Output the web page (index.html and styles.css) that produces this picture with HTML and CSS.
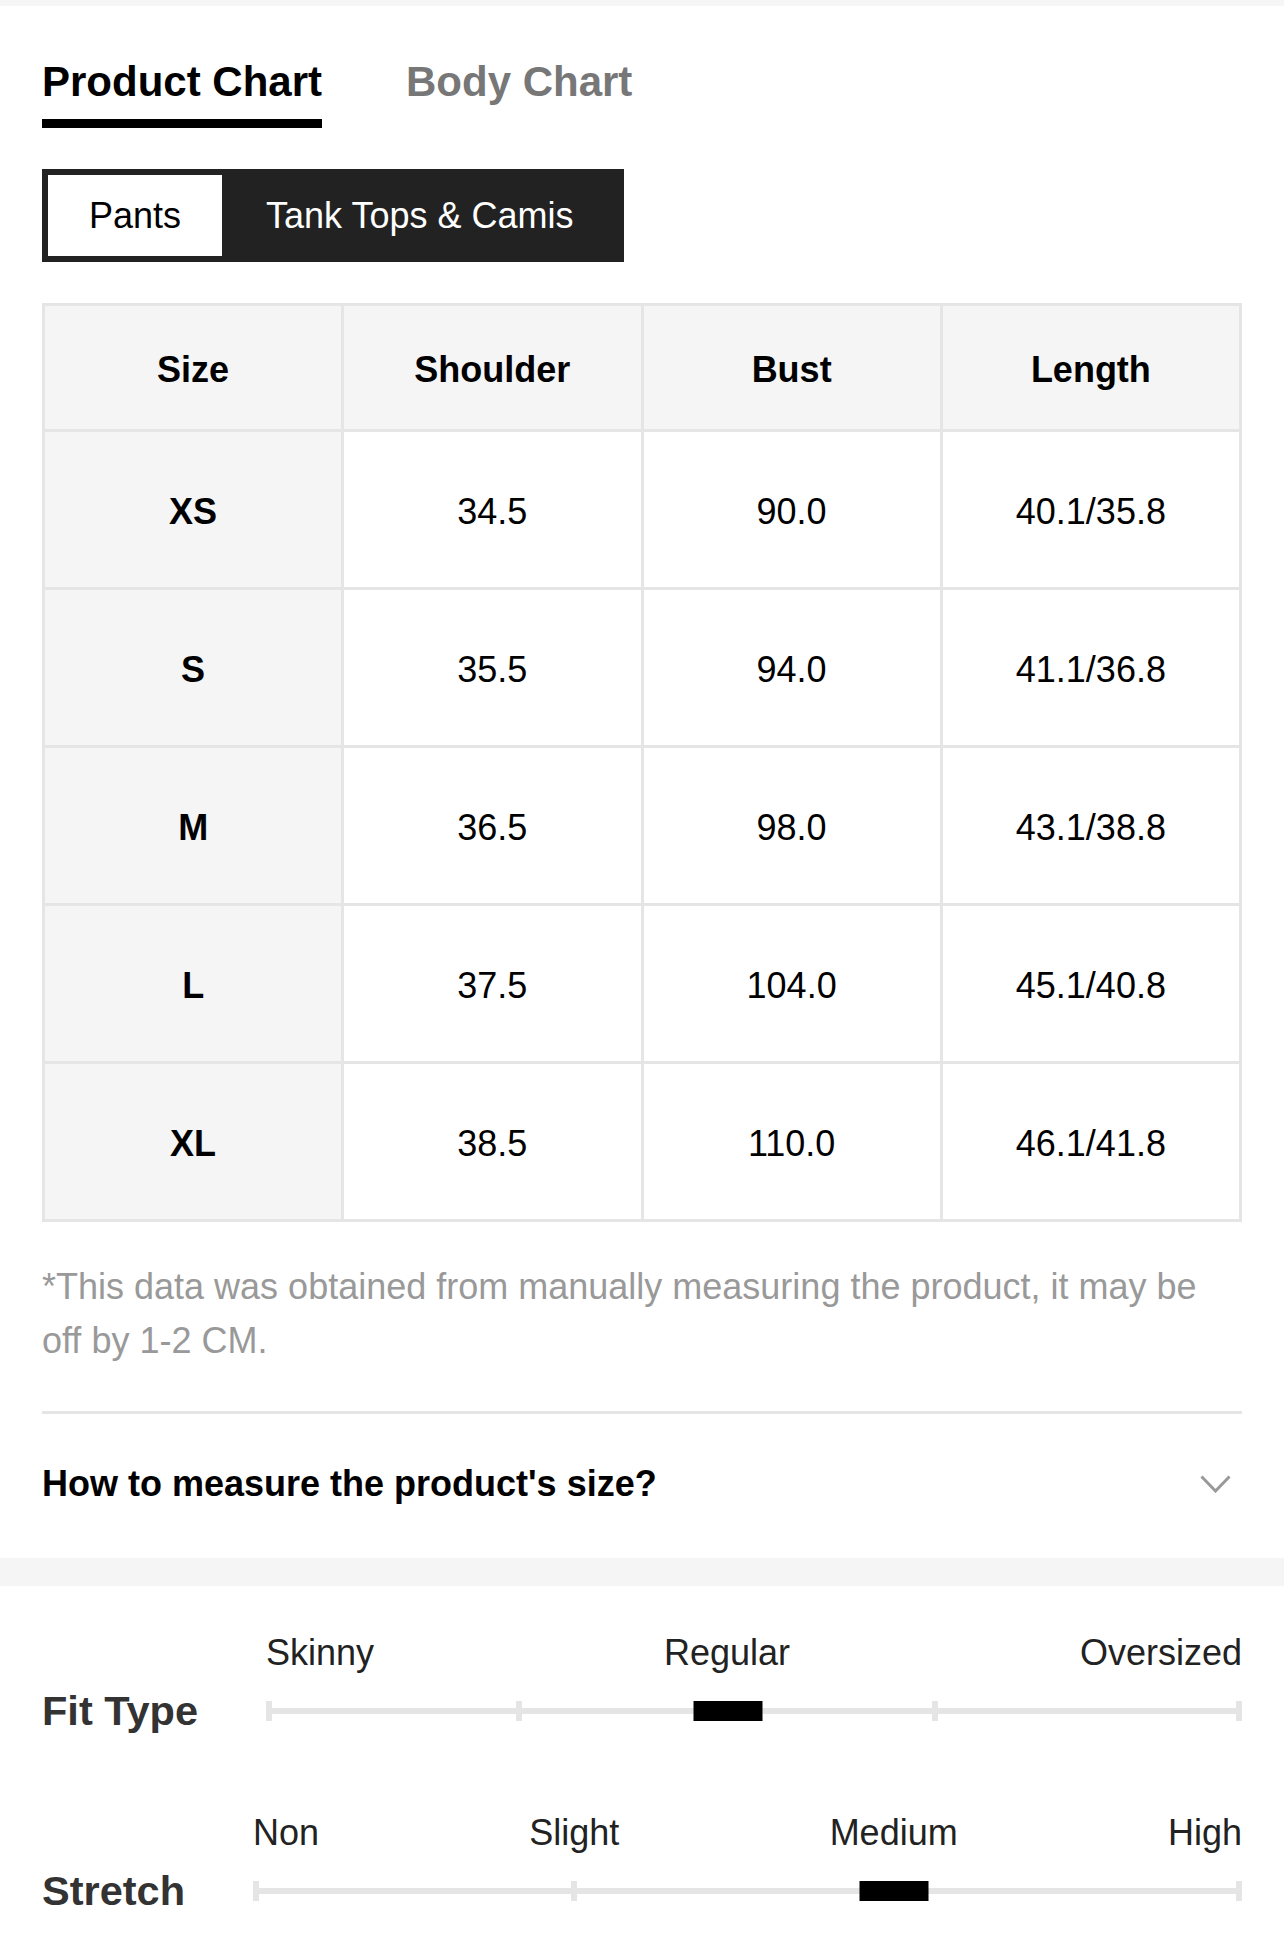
FILE: index.html
```html
<!DOCTYPE html>
<html lang="en">
<head>
<meta charset="utf-8">
<title>Size Guide</title>
<link rel="stylesheet" href="styles.css">
</head>
<body>
<div class="strip"></div>
<div class="content">
  <div class="tabs">
    <div class="tab tab-active">Product Chart</div>
    <div class="tab">Body Chart</div>
  </div>

  <div class="segment">
    <div class="seg-item seg-active">Pants</div>
    <div class="seg-item">Tank Tops &amp; Camis</div>
  </div>

  <div class="table">
    <div class="cell head">Size</div>
    <div class="cell head">Shoulder</div>
    <div class="cell head">Bust</div>
    <div class="cell head">Length</div>

    <div class="cell size">XS</div>
    <div class="cell">34.5</div>
    <div class="cell">90.0</div>
    <div class="cell">40.1/35.8</div>

    <div class="cell size">S</div>
    <div class="cell">35.5</div>
    <div class="cell">94.0</div>
    <div class="cell">41.1/36.8</div>

    <div class="cell size">M</div>
    <div class="cell">36.5</div>
    <div class="cell">98.0</div>
    <div class="cell">43.1/38.8</div>

    <div class="cell size">L</div>
    <div class="cell">37.5</div>
    <div class="cell">104.0</div>
    <div class="cell">45.1/40.8</div>

    <div class="cell size">XL</div>
    <div class="cell">38.5</div>
    <div class="cell">110.0</div>
    <div class="cell">46.1/41.8</div>
  </div>

  <p class="note">*This data was obtained from manually measuring the product, it may be off by 1-2 CM.</p>

  <div class="question">
    <span class="question-text">How to measure the product's size?</span>
    <svg class="chevron" width="31" height="18" viewBox="0 0 31 18" aria-hidden="true">
      <polyline points="1.5,1.5 15.5,16 29.5,1.5" fill="none" stroke="#999" stroke-width="3"/>
    </svg>
  </div>
</div>

<div class="band"></div>

<div class="content fits">
  <div class="fit">
    <div></div>
    <div class="labels"><span>Skinny</span><span>Regular</span><span>Oversized</span></div>
    <div class="fit-title">Fit Type</div>
    <div class="track">
      <span class="tick tick-start"></span>
      <span class="tick tick-mid" style="left:25.95%"></span>
      <span class="tick tick-mid" style="left:68.5%"></span>
      <span class="tick tick-end"></span>
      <span class="marker" style="left:47.3%"></span>
    </div>
  </div>

  <div class="fit fit-second">
    <div></div>
    <div class="labels"><span>Non</span><span>Slight</span><span>Medium</span><span>High</span></div>
    <div class="fit-title">Stretch</div>
    <div class="track">
      <span class="tick tick-start"></span>
      <span class="tick tick-mid" style="left:32.5%"></span>
      <span class="tick tick-end"></span>
      <span class="marker" style="left:64.8%"></span>
    </div>
  </div>
</div>
</body>
</html>
```

FILE: styles.css
```css
* {
  box-sizing: border-box;
}

html, body {
  margin: 0;
  padding: 0;
  background: #fff;
}

body {
  font-family: "Liberation Sans", Arial, Helvetica, sans-serif;
  color: #000;
}

.strip {
  height: 6px;
  background: #f6f6f6;
}

.content {
  padding: 0 42px;
}

/* Tabs */
.tabs {
  display: flex;
  gap: 84px;
  padding-top: 52px;
}

.tab {
  font-size: 42px;
  font-weight: 700;
  line-height: 48px;
  color: #777;
  padding-bottom: 13px;
  border-bottom: 9px solid transparent;
}

.tab-active {
  color: #000;
  border-bottom-color: #000;
}

/* Segment */
.segment {
  display: inline-flex;
  margin-top: 41px;
  padding: 6px;
  background: #222;
}

.seg-item {
  height: 81px;
  display: flex;
  align-items: center;
  font-size: 36px;
  color: #fff;
  padding: 0 44px;
}

.seg-active {
  background: #fff;
  color: #000;
  padding: 0 41px;
}

/* Table */
.table {
  margin-top: 41px;
  display: grid;
  grid-template-columns: repeat(4, 1fr);
  grid-template-rows: 123px repeat(5, 155px);
  gap: 3px;
  padding: 3px;
  background: #e5e5e5;
}

.cell {
  background: #fff;
  display: flex;
  align-items: center;
  justify-content: center;
  font-size: 36px;
  color: #000;
  padding-top: 4px;
}

.head,
.size {
  background: #f5f5f5;
  font-weight: 700;
}

/* Note */
.note {
  margin: 38px 0 0;
  font-size: 36px;
  line-height: 54px;
  color: #999;
  padding-bottom: 43px;
  border-bottom: 3px solid #e5e5e5;
}

/* Question */
.question {
  display: flex;
  align-items: center;
  justify-content: space-between;
  padding: 46px 11px 50px 0;
}

.question-text {
  font-size: 36px;
  font-weight: 700;
  line-height: 48px;
  color: #000;
}

.chevron {
  display: block;
}

.band {
  height: 28px;
  background: #f5f5f5;
}

/* Fit sliders */
.fits {
  padding-top: 46px;
  padding-bottom: 24px;
}

.fit {
  display: grid;
  grid-template-columns: auto 1fr;
  column-gap: 68px;
  row-gap: 13px;
  align-items: center;
}

.fit-second {
  margin-top: 77px;
}

.labels {
  display: flex;
  justify-content: space-between;
  font-size: 36px;
  line-height: 42px;
  color: #222;
}

.fit-title {
  font-size: 41.5px;
  font-weight: 700;
  line-height: 48px;
  color: #333;
}

.track {
  position: relative;
  height: 20px;
}

.track::before {
  content: "";
  position: absolute;
  left: 0;
  right: 0;
  top: 7px;
  height: 6px;
  background: #e5e5e5;
}

.tick {
  position: absolute;
  top: 0;
  width: 6px;
  height: 20px;
  background: #e5e5e5;
}

.tick-start {
  left: 0;
}

.tick-end {
  right: 0;
}

.tick-mid {
  transform: translateX(-50%);
}

.marker {
  position: absolute;
  top: 0;
  width: 69px;
  height: 20px;
  background: #000;
  transform: translateX(-50%);
}
```
